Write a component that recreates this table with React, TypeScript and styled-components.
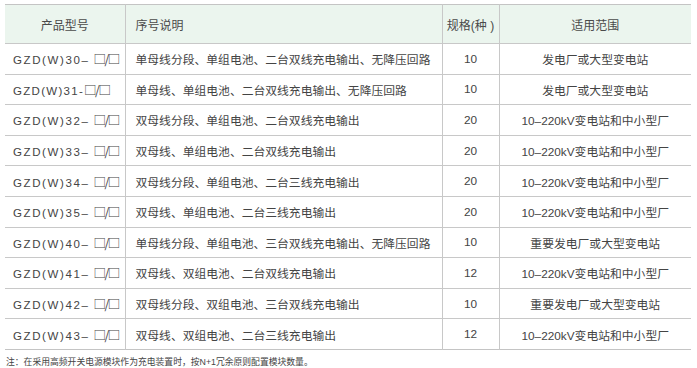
import styled, { createGlobalStyle } from "styled-components";

type Row = {
  model: string;
  tight?: boolean;
  desc: string;
  spec: string;
  scope: string;
};

const rows: Row[] = [
  { model: "GZD(W)30–", desc: "单母线分段、单组电池、二台双线充电输出、无降压回路", spec: "10", scope: "发电厂或大型变电站" },
  { model: "GZD(W)31-", tight: true, desc: "单母线、单组电池、二台双线充电输出、无降压回路", spec: "10", scope: "发电厂或大型变电站" },
  { model: "GZD(W)32–", desc: "双母线分段、单组电池、二台双线充电输出", spec: "20", scope: "10–220kV变电站和中小型厂" },
  { model: "GZD(W)33–", desc: "双母线、单组电池、二台双线充电输出", spec: "20", scope: "10–220kV变电站和中小型厂" },
  { model: "GZD(W)34–", desc: "双母线分段、单组电池、二台三线充电输出", spec: "20", scope: "10–220kV变电站和中小型厂" },
  { model: "GZD(W)35–", desc: "双母线、单组电池、二台三线充电输出", spec: "20", scope: "10–220kV变电站和中小型厂" },
  { model: "GZD(W)40–", desc: "单母线分段、单组电池、三台双线充电输出、无降压回路", spec: "10", scope: "重要发电厂或大型变电站" },
  { model: "GZD(W)41–", desc: "双母线、双组电池、二台双线充电输出", spec: "12", scope: "10–220kV变电站和中小型厂" },
  { model: "GZD(W)42–", desc: "双母线分段、双组电池、三台双线充电输出", spec: "10", scope: "重要发电厂或大型变电站" },
  { model: "GZD(W)43–", desc: "双母线、双组电池、二台三线充电输出", spec: "12", scope: "10–220kV变电站和中小型厂" },
];

const GlobalStyle = createGlobalStyle`
  html, body {
    margin: 0;
    padding: 0;
    background: #ffffff;
  }
  body {
    font-family: "Liberation Sans", "Noto Sans CJK SC", sans-serif;
    color: #444444;
  }
`;

const Page = styled.div`
  width: 697px;
  height: 368px;
  padding: 4px 6px 0 5px;
  box-sizing: border-box;
  overflow: hidden;
`;

const Table = styled.table`
  width: 686px;
  border-collapse: collapse;
  table-layout: fixed;
  border-top: 1px solid #c4c4c4;
  border-bottom: 1px solid #c4c4c4;
`;

const HeadRow = styled.tr`
  height: 39px;
  background: #ebf5ee;
`;

const BodyRow = styled.tr`
  height: 30.6px;
  border-top: 1px solid #c8c8c8;
`;

const HeadCell = styled.th<{ $align?: "left" | "center" }>`
  font-weight: normal;
  font-size: 12px;
  color: #4a4a4a;
  text-align: ${(p) => p.$align ?? "center"};
  padding: 0 ${(p) => (p.$align === "left" ? "10px" : "0")};
  border-left: 1px solid #c8c8c8;
  &:first-child {
    border-left: none;
  }
`;

const Cell = styled.td<{ $align?: "left" | "center" }>`
  font-size: 11.8px;
  color: #444444;
  text-align: ${(p) => p.$align ?? "center"};
  padding: 0 ${(p) => (p.$align === "left" ? "10px" : "0")};
  white-space: nowrap;
  border-left: 1px solid #c8c8c8;
  &:first-child {
    border-left: none;
  }
`;

const ModelCell = styled.td`
  padding: 0 0 0 8px;
  white-space: nowrap;
  font-size: 11.5px;
  color: #444444;
`;

const Model = styled.span<{ $tight?: boolean }>`
  letter-spacing: ${(p) => (p.$tight ? "1.3px" : "1.6px")};
`;

const Boxes = styled.span<{ $tight?: boolean }>`
  font-family: "Noto Sans CJK SC", sans-serif;
  font-size: 12.5px;
  margin-left: ${(p) => (p.$tight ? "0" : "4px")};
  letter-spacing: -1.5px;
`;

const Note = styled.p`
  margin: 5px 0 0 1px;
  font-size: 8.8px;
  color: #444444;
  white-space: nowrap;
`;

export default function App() {
  return (
    <Page>
      <GlobalStyle />
      <Table>
        <colgroup>
          <col style={{ width: 120 }} />
          <col style={{ width: 317 }} />
          <col style={{ width: 57 }} />
          <col style={{ width: 192 }} />
        </colgroup>
        <thead>
          <HeadRow>
            <HeadCell>产品型号</HeadCell>
            <HeadCell $align="left">序号说明</HeadCell>
            <HeadCell>规格(种 )</HeadCell>
            <HeadCell>适用范围</HeadCell>
          </HeadRow>
        </thead>
        <tbody>
          {rows.map((r) => (
            <BodyRow key={r.model}>
              <ModelCell>
                <Model $tight={r.tight}>{r.model}</Model>
                <Boxes $tight={r.tight}>□/□</Boxes>
              </ModelCell>
              <Cell $align="left">{r.desc}</Cell>
              <Cell>{r.spec}</Cell>
              <Cell>{r.scope}</Cell>
            </BodyRow>
          ))}
        </tbody>
      </Table>
      <Note>注：在采用高频开关电源模块作为充电装置时，按N+1冗余原则配置模块数量。</Note>
    </Page>
  );
}
